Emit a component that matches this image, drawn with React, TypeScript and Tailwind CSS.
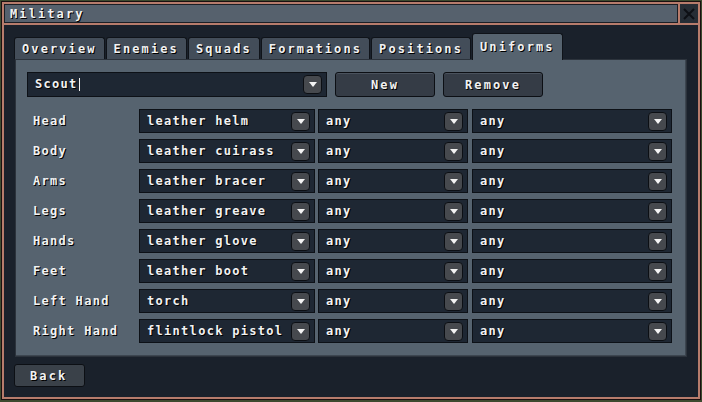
const tabs = ["Overview", "Enemies", "Squads", "Formations", "Positions", "Uniforms"];

const slots = [
  { label: "Head", item: "leather helm" },
  { label: "Body", item: "leather cuirass" },
  { label: "Arms", item: "leather bracer" },
  { label: "Legs", item: "leather greave" },
  { label: "Hands", item: "leather glove" },
  { label: "Feet", item: "leather boot" },
  { label: "Left Hand", item: "torch" },
  { label: "Right Hand", item: "flintlock pistol" },
];

const font =
  "font-['DejaVu_Sans_Mono',monospace] font-bold text-[12px] leading-none tracking-[1.3px] text-[#f2f2f2] [text-shadow:1px_1px_0_#000]";

const tabFont =
  "font-['DejaVu_Sans_Mono',monospace] font-bold text-[12px] leading-none tracking-[2.1px] text-[#f2f2f2] [text-shadow:1px_1px_0_#000]";

function Arrow() {
  return (
    <div className="flex h-[19px] w-[19px] shrink-0 items-center justify-center rounded-[4px] border border-[#0c0f14] bg-[#46494e]">
      <svg width="8" height="5" viewBox="0 0 8 5">
        <path d="M0 0h8L4 5z" fill="#f4f4f4" />
      </svg>
    </div>
  );
}

function Select({ value, width }: { value: string; width: string }) {
  return (
    <div
      className={`${width} flex h-[24px] items-center justify-between border border-[#0d1117] bg-[#1e2733] pl-[7px] pr-[4px]`}
    >
      <span className={font}>{value}</span>
      <Arrow />
    </div>
  );
}

function Button({ label, width }: { label: string; width: string }) {
  return (
    <div
      className={`${width} flex h-[25px] items-center justify-center rounded-[3px] border border-[#0c0f14] bg-[#353c46] shadow-[inset_0_1px_0_#4a525d]`}
    >
      <span className={tabFont}>{label}</span>
    </div>
  );
}

export default function App() {
  return (
    <div className="h-[402px] w-[702px] bg-[#3d4a2f] pl-[1px] pt-[1px]">
      <div className="flex h-[399px] w-[700px] flex-col border border-[#1a1010] bg-[#1a2029]">
        <div className="flex flex-1 flex-col border-2 border-[#b77c6c]">
          {/* title */}
          <div className="flex h-[21px] border-b-2 border-[#b77c6c]">
            <div className="flex flex-1 items-center border border-[#1b1f26] bg-[#56616d] pl-[5px]">
              <span className={tabFont}>Military</span>
            </div>
            <div className="flex w-[20px] items-center justify-center border-l-2 border-[#b77c6c] bg-[#262d35]">
              <svg width="12" height="12" viewBox="0 0 12 12">
                <path d="M1 1l10 10M11 1L1 11" stroke="#0d1015" strokeWidth="2" />
              </svg>
            </div>
          </div>
          {/* body */}
          <div className="flex flex-1 flex-col bg-[#1a212b] px-[10px] pt-[7px]">
            <div className="flex h-[27px] items-end gap-[1px]">
              {tabs.map((t) => {
                const active = t === "Uniforms";
                return (
                  <div
                    key={t}
                    className={`flex items-center rounded-t-[3px] border border-b-0 border-[#0f1319] px-[7px] ${
                      active
                        ? "relative top-[1px] h-[27px] bg-[#56636f]"
                        : "h-[22px] bg-[#434d59]"
                    }`}
                  >
                    <span className={tabFont}>{t}</span>
                  </div>
                );
              })}
            </div>
            <div className="ml-[1px] flex w-[672px] flex-col gap-[6px] border border-[#2c333c] bg-[#56636f] pb-[13px] pl-[11px] pt-[12px] shadow-[inset_-1px_-1px_0_#3d4650]">
              <div className="mb-[6px] flex gap-[8px]">
                <div className="flex h-[25px] w-[300px] items-center justify-between border border-[#0d1117] bg-[#1e2733] pl-[7px] pr-[4px]">
                  <span className={font}>
                    Scout<span className="ml-[1px] inline-block h-[13px] w-[1px] bg-[#f2f2f2] align-middle" />
                  </span>
                  <Arrow />
                </div>
                <Button label="New" width="w-[100px]" />
                <Button label="Remove" width="w-[100px]" />
              </div>
              {slots.map((s) => (
                <div key={s.label} className="flex items-center">
                  <div className="flex w-[112px] items-center pl-[6px]">
                    <span className={font}>{s.label}</span>
                  </div>
                  <Select value={s.item} width="w-[176px]" />
                  <div className="w-[3px]" />
                  <Select value="any" width="w-[150px]" />
                  <div className="w-[4px]" />
                  <Select value="any" width="w-[200px]" />
                </div>
              ))}
            </div>
            <div className="mt-[7px]">
              <div className="flex h-[23px] w-[71px] items-center rounded-[3px] border border-[#0c0f14] bg-[#3a4149] pl-[15px]">
                <span className={tabFont}>Back</span>
              </div>
            </div>
          </div>
        </div>
      </div>
    </div>
  );
}
